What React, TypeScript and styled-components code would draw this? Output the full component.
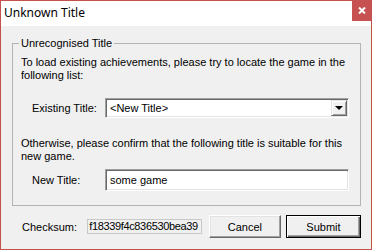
import React from "react";
import styled, { createGlobalStyle } from "styled-components";

const GlobalStyle = createGlobalStyle`
  html, body {
    margin: 0;
    padding: 0;
    background: #ffffff;
  }
  * {
    box-sizing: border-box;
  }
`;

const Window = styled.div`
  width: 372px;
  height: 250px;
  border: 1px solid #c4514b;
  display: flex;
  flex-direction: column;
  font-family: "Liberation Sans", Arial, sans-serif;
  font-size: 11px;
  color: #000;
`;

const TitleBar = styled.div`
  height: 25px;
  background: #ffffff;
  display: flex;
  align-items: flex-start;
  justify-content: space-between;
`;

const TitleText = styled.div`
  font-family: "Noto Sans", "Liberation Sans", sans-serif;
  font-size: 12px;
  line-height: 16px;
  padding: 4px 0 0 3px;
  color: #000;
`;

const CloseButton = styled.div`
  width: 19px;
  height: 21px;
  margin-top: -1px;
  background: #c75050;
  display: flex;
  align-items: center;
  justify-content: center;
`;

const Body = styled.div`
  flex: 1;
  background: #f0f0f0;
  padding: 10px 10px 0 11px;
  display: flex;
  flex-direction: column;
`;

const GroupBox = styled.fieldset`
  margin: 0;
  border: 1px solid #b4b4b4;
  border-radius: 0;
  padding: 4px 8px 14px 8px;
`;

const Legend = styled.legend`
  padding: 0 2px;
  margin-left: -2px;
  line-height: 14px;
`;

const Paragraph = styled.p<{ $top: number }>`
  margin: ${(p) => p.$top}px 0 0 0;
  line-height: 13px;
`;

const FieldRow = styled.div<{ $top: number; $height: number }>`
  display: flex;
  align-items: center;
  margin-top: ${(p) => p.$top}px;
  height: ${(p) => p.$height}px;
`;

const FieldLabel = styled.span`
  width: 84px;
  padding-left: 11px;
`;

const Sunken = styled.div`
  flex: 1;
  height: 100%;
  margin-right: 3px;
  background: #ffffff;
  border-top: 1px solid #a0a0a0;
  border-left: 1px solid #a0a0a0;
  border-right: 1px solid #ffffff;
  border-bottom: 1px solid #ffffff;
  box-shadow: inset 1px 1px 0 #696969, inset -1px -1px 0 #e3e3e3;
  display: flex;
  align-items: center;
  padding-left: 4px;
`;

const ComboValue = styled.span`
  flex: 1;
`;

const DropButton = styled.div`
  width: 16px;
  height: 16px;
  margin-right: 1px;
  background: #f0f0f0;
  border-top: 1px solid #e3e3e3;
  border-left: 1px solid #e3e3e3;
  border-right: 1px solid #696969;
  border-bottom: 1px solid #696969;
  box-shadow: inset 1px 1px 0 #ffffff, inset -1px -1px 0 #a0a0a0;
  display: flex;
  align-items: center;
  justify-content: center;
`;

const Arrow = styled.span`
  width: 0;
  height: 0;
  border-left: 4px solid transparent;
  border-right: 4px solid transparent;
  border-top: 4px solid #000;
`;

const Footer = styled.div`
  display: flex;
  align-items: center;
  margin-top: 9px;
  height: 23px;
  padding-left: 10px;
`;

const ChecksumLabel = styled.span`
  width: 66px;
`;

const ChecksumField = styled.div`
  width: 116px;
  height: 15px;
  border: 1px solid #c8c8c8;
  background: #f0f0f0;
  overflow: hidden;
  white-space: nowrap;
  line-height: 13px;
  padding-left: 1px;
  letter-spacing: -0.35px;
`;

const Button = styled.div<{ $default?: boolean }>`
  height: 23px;
  width: ${(p) => (p.$default ? 76 : 73)}px;
  margin-left: ${(p) => (p.$default ? 5 : 7)}px;
  background: #f0f0f0;
  display: flex;
  align-items: center;
  justify-content: center;
  border-top: 1px solid ${(p) => (p.$default ? "#000" : "#fff")};
  border-left: 1px solid ${(p) => (p.$default ? "#000" : "#fff")};
  border-right: 1px solid ${(p) => (p.$default ? "#000" : "#696969")};
  border-bottom: 1px solid ${(p) => (p.$default ? "#000" : "#696969")};
  box-shadow: ${(p) =>
    p.$default
      ? "inset 1px 1px 0 #fff, inset -1px -1px 0 #696969, inset -2px -2px 0 #a0a0a0"
      : "inset -1px -1px 0 #a0a0a0, inset 1px 1px 0 #e3e3e3"};
`;

export default function App() {
  return (
    <>
      <GlobalStyle />
      <Window>
        <TitleBar>
          <TitleText>Unknown Title</TitleText>
          <CloseButton>
            <svg width="8" height="7" viewBox="0 0 8 7">
              <path d="M1 0.5 L7 6.5 M7 0.5 L1 6.5" stroke="#fff" strokeWidth="2" />
            </svg>
          </CloseButton>
        </TitleBar>
        <Body>
          <GroupBox>
            <Legend>Unrecognised Title</Legend>
            <Paragraph $top={2}>
              To load existing achievements, please try to locate the game in the
              following list:
            </Paragraph>
            <FieldRow $top={16} $height={20}>
              <FieldLabel>Existing Title:</FieldLabel>
              <Sunken>
                <ComboValue>&lt;New Title&gt;</ComboValue>
                <DropButton>
                  <Arrow />
                </DropButton>
              </Sunken>
            </FieldRow>
            <Paragraph $top={19}>
              Otherwise, please confirm that the following title is suitable for this
              new game.
            </Paragraph>
            <FieldRow $top={6} $height={22}>
              <FieldLabel>New Title:</FieldLabel>
              <Sunken>some game</Sunken>
            </FieldRow>
          </GroupBox>
          <Footer>
            <ChecksumLabel>Checksum:</ChecksumLabel>
            <ChecksumField>f18339f4c836530bea39</ChecksumField>
            <Button>Cancel</Button>
            <Button $default>Submit</Button>
          </Footer>
        </Body>
      </Window>
    </>
  );
}
